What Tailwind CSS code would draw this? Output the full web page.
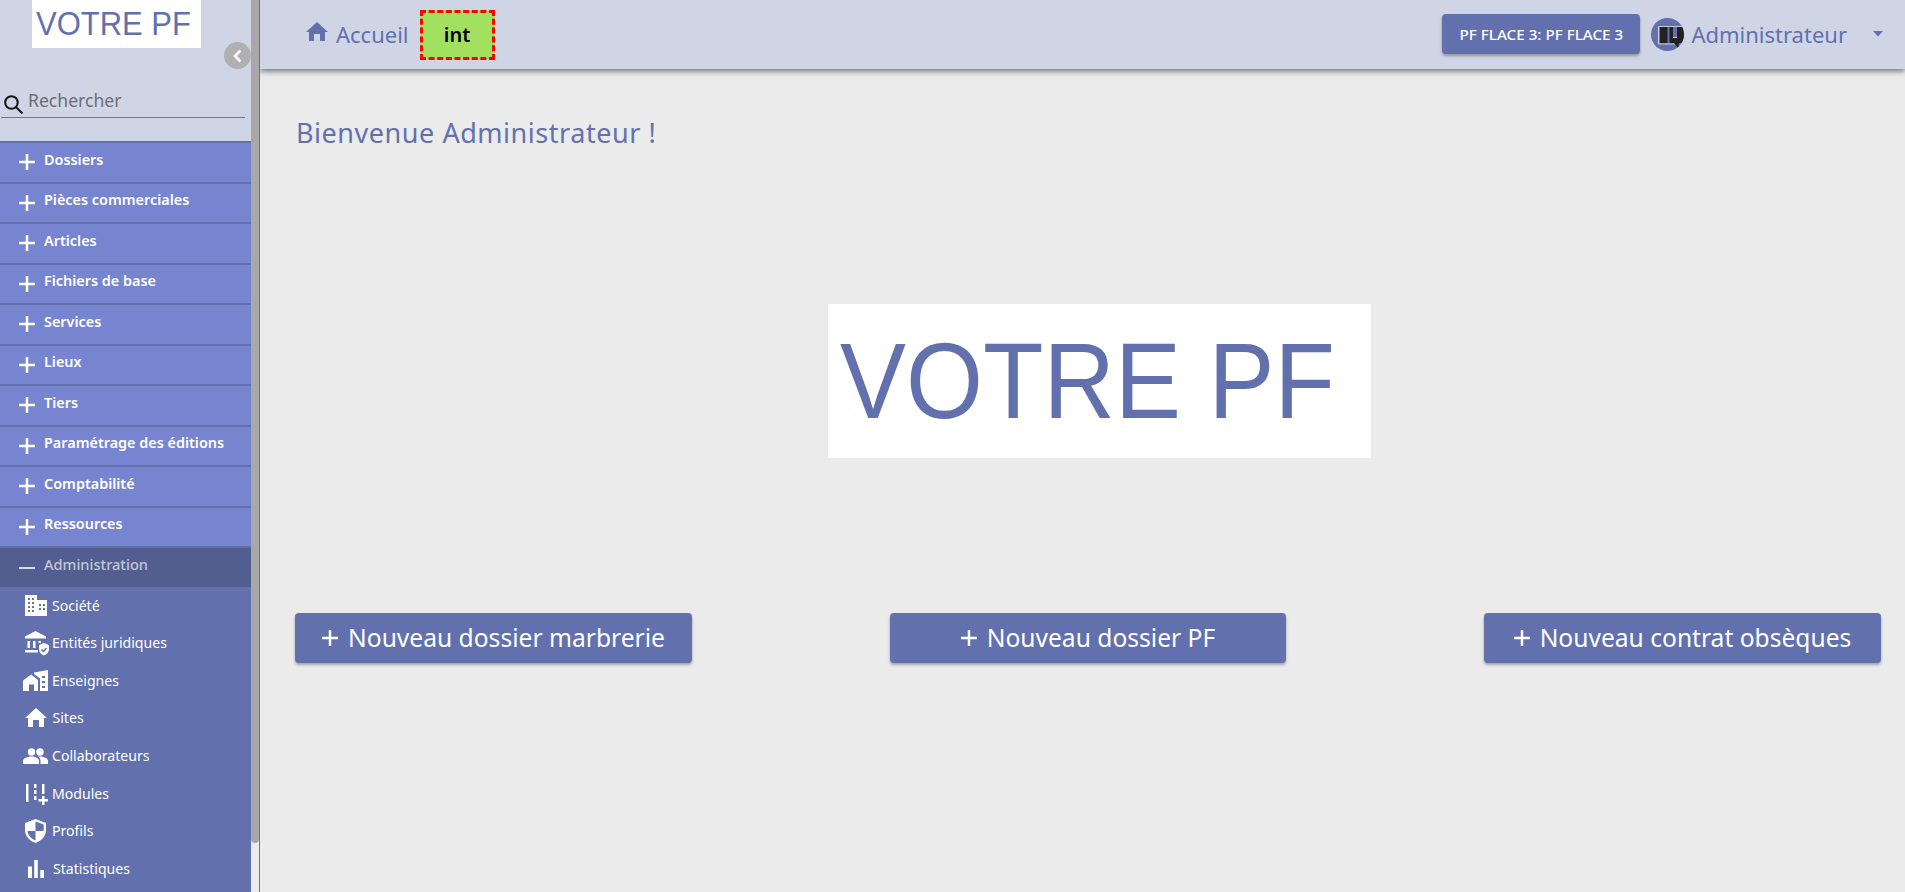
<!DOCTYPE html>
<html lang="fr">
<head>
<meta charset="utf-8">
<script src="https://cdn.jsdelivr.net/npm/@tailwindcss/browser@4"></script>
</head>
<body class="w-[1905px] h-[892px] overflow-hidden bg-[#ebebeb] font-['Noto_Sans',sans-serif] text-[#6271ad]">
<div class="flex h-[892px]">
  <aside class="w-[260px] h-[892px] shrink-0 flex border-r border-[#6271ad] bg-[#ebebeb] relative z-20">
    <div class="w-[251px] h-full bg-[#d0d5e6] flex flex-col overflow-hidden">
      <div class="h-[141px] shrink-0 relative">
        <div class="absolute left-[32px] top-0 w-[169px] h-[48px] bg-white font-['Liberation_Sans',sans-serif] text-[33.5px] leading-[48px] pl-[3.5px] whitespace-nowrap"><span class="inline-block origin-left scale-x-[0.925]">VOTRE PF</span></div>
        <div class="absolute left-[224px] top-[42px] w-[27px] h-[27px] rounded-full bg-[#b0b0b0] flex items-center justify-center">
          <svg width="12" height="14" viewBox="0 0 12 14" fill="none" stroke="#fff" stroke-width="2.6"><path d="M8.5 1.5 3 7l5.5 5.5"/></svg>
        </div>
        <div class="absolute left-[1px] top-[85px] w-[244px] h-[33px] border-b border-[#75757f] flex items-center">
          <svg class="mt-[5px]" width="23" height="23" viewBox="0 0 22 22" fill="none" stroke="#15151a" stroke-width="2"><circle cx="10" cy="10" r="6"/><path d="m14.5 14.5 6 6"/></svg>
          <span class="ml-[4px] text-[17.6px] leading-[24px] text-[#6d6d74] -mt-[2px]">Rechercher</span>
        </div>
      </div>
      <nav class="flex flex-col bg-[#6271ad] text-white flex-1">
        <div class="h-[40.5px] shrink-0 bg-[#7785d0] border-t-2 border-[#6271ad] flex items-center pl-[19px] gap-[9px] text-[14.4px] font-semibold">
          <svg width="16" height="16" viewBox="0 0 16 16" fill="#fff"><path d="M6.750 0h2.500v6.750H16v2.500H9.250V16h-2.500V9.250H0v-2.500h6.750z"/></svg><span class="-mt-[5px]">Dossiers</span>
        </div>
        <div class="h-[40.5px] shrink-0 bg-[#7785d0] border-t-2 border-[#6271ad] flex items-center pl-[19px] gap-[9px] text-[14.4px] font-semibold">
          <svg width="16" height="16" viewBox="0 0 16 16" fill="#fff"><path d="M6.750 0h2.500v6.750H16v2.500H9.250V16h-2.500V9.250H0v-2.500h6.750z"/></svg><span class="-mt-[5px]">Pièces commerciales</span>
        </div>
        <div class="h-[40.5px] shrink-0 bg-[#7785d0] border-t-2 border-[#6271ad] flex items-center pl-[19px] gap-[9px] text-[14.4px] font-semibold">
          <svg width="16" height="16" viewBox="0 0 16 16" fill="#fff"><path d="M6.750 0h2.500v6.750H16v2.500H9.250V16h-2.500V9.250H0v-2.500h6.750z"/></svg><span class="-mt-[5px]">Articles</span>
        </div>
        <div class="h-[40.5px] shrink-0 bg-[#7785d0] border-t-2 border-[#6271ad] flex items-center pl-[19px] gap-[9px] text-[14.4px] font-semibold">
          <svg width="16" height="16" viewBox="0 0 16 16" fill="#fff"><path d="M6.750 0h2.500v6.750H16v2.500H9.250V16h-2.500V9.250H0v-2.500h6.750z"/></svg><span class="-mt-[5px]">Fichiers de base</span>
        </div>
        <div class="h-[40.5px] shrink-0 bg-[#7785d0] border-t-2 border-[#6271ad] flex items-center pl-[19px] gap-[9px] text-[14.4px] font-semibold">
          <svg width="16" height="16" viewBox="0 0 16 16" fill="#fff"><path d="M6.750 0h2.500v6.750H16v2.500H9.250V16h-2.500V9.250H0v-2.500h6.750z"/></svg><span class="-mt-[5px]">Services</span>
        </div>
        <div class="h-[40.5px] shrink-0 bg-[#7785d0] border-t-2 border-[#6271ad] flex items-center pl-[19px] gap-[9px] text-[14.4px] font-semibold">
          <svg width="16" height="16" viewBox="0 0 16 16" fill="#fff"><path d="M6.750 0h2.500v6.750H16v2.500H9.250V16h-2.500V9.250H0v-2.500h6.750z"/></svg><span class="-mt-[5px]">Lieux</span>
        </div>
        <div class="h-[40.5px] shrink-0 bg-[#7785d0] border-t-2 border-[#6271ad] flex items-center pl-[19px] gap-[9px] text-[14.4px] font-semibold">
          <svg width="16" height="16" viewBox="0 0 16 16" fill="#fff"><path d="M6.750 0h2.500v6.750H16v2.500H9.250V16h-2.500V9.250H0v-2.500h6.750z"/></svg><span class="-mt-[5px]">Tiers</span>
        </div>
        <div class="h-[40.5px] shrink-0 bg-[#7785d0] border-t-2 border-[#6271ad] flex items-center pl-[19px] gap-[9px] text-[14.4px] font-semibold">
          <svg width="16" height="16" viewBox="0 0 16 16" fill="#fff"><path d="M6.750 0h2.500v6.750H16v2.500H9.250V16h-2.500V9.250H0v-2.500h6.750z"/></svg><span class="-mt-[5px]">Paramétrage des éditions</span>
        </div>
        <div class="h-[40.5px] shrink-0 bg-[#7785d0] border-t-2 border-[#6271ad] flex items-center pl-[19px] gap-[9px] text-[14.4px] font-semibold">
          <svg width="16" height="16" viewBox="0 0 16 16" fill="#fff"><path d="M6.750 0h2.500v6.750H16v2.500H9.250V16h-2.500V9.250H0v-2.500h6.750z"/></svg><span class="-mt-[5px]">Comptabilité</span>
        </div>
        <div class="h-[40.5px] shrink-0 bg-[#7785d0] border-t-2 border-[#6271ad] flex items-center pl-[19px] gap-[9px] text-[14.4px] font-semibold">
          <svg width="16" height="16" viewBox="0 0 16 16" fill="#fff"><path d="M6.750 0h2.500v6.750H16v2.500H9.250V16h-2.500V9.250H0v-2.500h6.750z"/></svg><span class="-mt-[5px]">Ressources</span>
        </div>
        <div class="h-[40.5px] shrink-0 bg-[#535e90] border-t-2 border-[#6271ad] flex items-center pl-[19px] gap-[9px] text-[14.6px] font-medium text-[#c4c7d6]">
          <svg width="16" height="16" viewBox="0 0 16 16" fill="#d8dae4"><path d="M0 8h16v2H0z"/></svg><span class="-mt-[5px]">Administration</span>
        </div>
        <div class="h-[37.7px] flex items-center text-[14.1px] pl-[24px]">
          <svg class="w-[23px] h-[21px]" viewBox="0 0 23 21" fill="#fff"><path fill-rule="evenodd" d="M1 0h12v5h10v16H1zM4 3v2h2V3zm4 0v2h2V3zM4 7v2h2V7zm4 0v2h2V7zm-4 4v2h2v-2zm4 0v2h2v-2zm-4 4v2h2v-2zm4 0v2h2v-2zm7-6v2h2V9zm4 0v2h2V9zm-4 4v2h2v-2zm4 0v2h2v-2z"/></svg><span class="ml-[5px]">Société</span>
        </div>
        <div class="h-[37.7px] flex items-center text-[14.1px] pl-[24px]">
          <svg class="w-[25px] h-[25px]" viewBox="0 0 25 25" fill="#fff"><path d="M11.500 0 22 5.500V7.500H1V5.500zM3.500 10h2.500v7H3.500zm5.500 0h2.500v7H9zm5.500 0H17v2h-2.500zM1 19h13v2.500H1z"/><path d="M20 12l5 2v4c0 3-2 5.500-5 6.500-3-1-5-3.500-5-6.500v-4z"/><path d="m17.500 18.500 2 2 3-3.500" fill="none" stroke="#6271ad" stroke-width="1.400"/></svg><span class="ml-[3px]">Entités juridiques</span>
        </div>
        <div class="h-[37.7px] flex items-center text-[14.1px] pl-[23px]">
          <svg class="w-[25px] h-[21px]" viewBox="0 0 25 21" fill="#fff"><path fill-rule="evenodd" d="M0 10.500 8 4.500l7 5.500v11h-4v-6.500H6V21H0z"/><path fill-rule="evenodd" d="M11 2.500 25 0v21h-8V8.500L11 4zM19 6v2h3V6zm0 5v2h3v-2zm0 5v2h3v-2z"/></svg><span class="ml-[4px] -mt-[1px]">Enseignes</span>
        </div>
        <div class="h-[37.7px] flex items-center text-[14.1px] pl-[25px]">
          <svg class="w-[22px] h-[20px]" viewBox="0 0 22 20" fill="#fff"><path d="M11 0 22 10h-3v9h-5v-7H8v7H3v-9H0z"/></svg><span class="ml-[5.500px] -mt-[1px]">Sites</span>
        </div>
        <div class="h-[37.7px] flex items-center text-[14.1px] pl-[23px]">
          <svg class="w-[25px] h-[16px]" viewBox="0 0 25 16" fill="#fff"><circle cx="8.500" cy="4" r="3.700"/><circle cx="17" cy="4" r="3.700"/><path d="M0 16v-3c0-3 5-4.500 8.500-4.500S16 10 16 13v3zm17.500 0v-3c0-2-1-3.300-2.500-4.400 1-.1 1.500-.1 2-.1 3.500 0 8 1.500 8 4.500v3z"/></svg><span class="ml-[4px] -mt-[1px]">Collaborateurs</span>
        </div>
        <div class="h-[37.7px] flex items-center text-[14.1px] pl-[26px]">
          <svg class="w-[22px] h-[22px]" viewBox="0 0 22 22" fill="#fff"><path d="M0 1h2.500v18H0zM8 1h2.500v4H8zm0 6h2.500v4H8zm0 6h2.500v4H8zM16 1h2.500v10H16zm0 12h2.500v3H22v2.500h-3.500V22H16v-3.500h-3.500V16H16z"/></svg><span class="ml-[4px] -mt-[1px]">Modules</span>
        </div>
        <div class="h-[37.7px] flex items-center text-[14.1px] pl-[25px]">
          <svg class="w-[21px] h-[24px]" viewBox="0 0 21 24" fill="#fff"><path fill-rule="evenodd" d="M10.500 0 21 4v7c0 6-4.500 11-10.500 13C4.500 22 0 17 0 11V4zm0 2.500V12H2.500c.5 4.500 4 8 8 9.400V12h8c.2-.5.2-1 .2-1.500V5.500z"/></svg><span class="ml-[6px] -mt-[1px]">Profils</span>
        </div>
        <div class="h-[37.7px] flex items-center text-[14.1px] pl-[28px]">
          <svg class="w-[16px] h-[18px]" viewBox="0 0 16 18" fill="#fff"><path d="M0 6.500h4V18H0zM6.200 0h3.600v18H6.200zM12.300 10H16v8h-3.700z"/></svg><span class="ml-[9px] -mt-[1px]">Statistiques</span>
        </div>
      </nav>
    </div>
    <div class="w-[8px] h-full bg-[#ebebeb]">
      <div class="w-[8px] h-[843px] bg-[#a8a8a8] rounded-b-[4px]"></div>
    </div>
  </aside>

  <div class="flex-1 min-w-0 flex flex-col">
    <header class="h-[69px] shrink-0 bg-[#d0d5e6] shadow-[0_2px_6px_rgba(0,0,0,0.55)] flex items-center pl-[46px] pr-[22px] relative z-10">
      <svg class="w-[22px] h-[19px] -mt-[6px]" viewBox="0 0 22 19" fill="#6271ad"><path d="M11 0 22 10h-3v9h-5v-7H8v7H3v-9H0z"/></svg>
      <span class="ml-[8px] -mt-[1px] text-[22px] leading-[30px]">Accueil</span>
      <div class="ml-[11px] w-[75px] h-[50px] bg-[#a2e060] border-[3px] border-dashed border-[#ff0000] flex items-center justify-center text-[20px] font-semibold text-black">int</div>
      <div class="ml-auto w-[198px] h-[40px] rounded-[4px] bg-[#6271ad] shadow-[0_2px_3px_rgba(0,0,0,0.3)] text-white text-[15.2px] font-medium flex items-center justify-center -mt-[1px]">PF FLACE 3: PF FLACE 3</div>
      <div class="ml-[11px] w-[33px] h-[33px] rounded-full bg-[#6271ad] overflow-hidden shrink-0">
        <svg width="33" height="33" viewBox="0 0 33 33"><path d="M7.500 8.500h25M7.500 8.500V26H26" fill="none" stroke="#c4c9de" stroke-width="1.200"/><path d="M9 9h7.500v16H9zM18.500 9h3.500v11h4V9h7v16h-5l-1 5-4-5h-4.500z" fill="#222"/><path d="M22 20h4v-1h-4z" fill="#c4c9de"/></svg>
      </div>
      <span class="ml-[7px] -mt-[2px] text-[22px] leading-[30px]">Administrateur</span>
      <svg class="ml-[26px] -mt-[1px]" width="10" height="6" viewBox="0 0 10 6" fill="#6271ad"><path d="M0 0h10L5 5.500z"/></svg>
    </header>
    <main class="flex-1 relative pl-[35px] pr-[24px]">
      <h1 class="mt-[44px] ml-[1px] text-[27px] leading-[40px] tracking-[0.02em]">Bienvenue Administrateur !</h1>
      <div class="mt-[151px] ml-[533px] w-[543px] h-[154px] bg-white font-['Liberation_Sans',sans-serif] text-[107px] leading-[154px] pl-[12px] whitespace-nowrap"><span class="inline-block origin-left scale-x-[0.925]">VOTRE PF</span></div>
      <div class="mt-[155px] flex justify-between">
        <button class="w-[397px] h-[50px] rounded-[4px] bg-[#6271ad] shadow-[0_2px_3px_rgba(0,0,0,0.3)] text-white text-[24.6px] flex items-center justify-center gap-[10px]"><svg width="16" height="16" viewBox="0 0 16 16" fill="#fff"><path d="M6.750 0h2.500v6.750H16v2.500H9.250V16h-2.500V9.250H0v-2.500h6.750z"/></svg>Nouveau dossier marbrerie</button>
        <button class="w-[396px] h-[50px] rounded-[4px] bg-[#6271ad] shadow-[0_2px_3px_rgba(0,0,0,0.3)] text-white text-[24.6px] flex items-center justify-center gap-[10px]"><svg width="16" height="16" viewBox="0 0 16 16" fill="#fff"><path d="M6.750 0h2.500v6.750H16v2.500H9.250V16h-2.500V9.250H0v-2.500h6.750z"/></svg>Nouveau dossier PF</button>
        <button class="w-[397px] h-[50px] rounded-[4px] bg-[#6271ad] shadow-[0_2px_3px_rgba(0,0,0,0.3)] text-white text-[24.6px] flex items-center justify-center gap-[10px]"><svg width="16" height="16" viewBox="0 0 16 16" fill="#fff"><path d="M6.750 0h2.500v6.750H16v2.500H9.250V16h-2.500V9.250H0v-2.500h6.750z"/></svg>Nouveau contrat obsèques</button>
      </div>
    </main>
  </div>
</div>
</body>
</html>
